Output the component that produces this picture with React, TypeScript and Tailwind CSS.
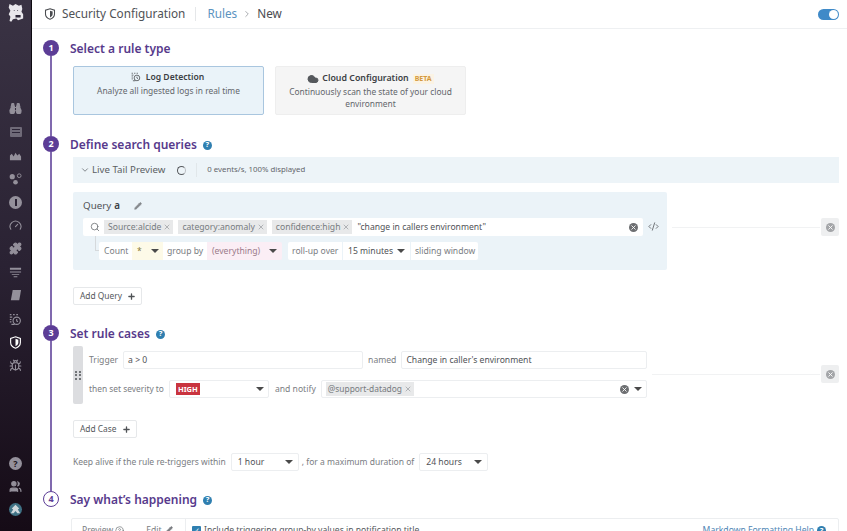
import type { ReactNode } from 'react';
import {
  Binoculars,
  Bug,
  ChevronDown,
  ChevronRight,
  CircleHelp,
  Cloud,
  CodeXml,
  Gauge,
  Pencil,
  Plus,
  Puzzle,
  Search,
  Users,
  X,
} from 'lucide-react';

const font = { fontFamily: '"Noto Sans", sans-serif' };

function Caret() {
  return <span className="ml-auto h-0 w-0 border-x-[4px] border-t-[4px] border-x-transparent border-t-[#4a4a4a]" />;
}

function Help() {
  return (
    <span className="flex h-[9px] w-[9px] items-center justify-center rounded-full bg-[#2f7fb0] text-[7.5px] font-bold leading-none text-white">
      ?
    </span>
  );
}

function ClearIcon({ className = 'bg-[#6d6f72]' }: { className?: string }) {
  return (
    <span className={`flex h-[9px] w-[9px] items-center justify-center rounded-full ${className}`}>
      <X className="h-[7px] w-[7px] text-white" strokeWidth={3} />
    </span>
  );
}

function Tag({ label, className = 'pl-[4px] text-[8.6px]' }: { label: string; className?: string }) {
  return (
    <span className={`flex h-[14px] items-center gap-[2px] bg-[#e8e9ea] pr-[2px] text-[#777b80] ${className}`}>
      {label}
      <X className="h-[8px] w-[8px] text-[#777b80]" strokeWidth={1.5} />
    </span>
  );
}

function LogIcon({ className = '' }: { className?: string }) {
  return (
    <svg viewBox="0 0 16 16" className={className} fill="none" stroke="currentColor" strokeWidth="1.4">
      <circle cx="9.5" cy="9.5" r="4.5" />
      <path d="M9.5 7.5v2.2l1.5 1M1 2h2M5 2h2M9 2h2M1 5h3M1 8h2M1 11h2M3 14h4" />
    </svg>
  );
}

function ShieldIcon({ className = '' }: { className?: string }) {
  return (
    <svg viewBox="0 0 16 16" className={className}>
      <path d="M8 1l6 2v5c0 3.5-2.5 5.8-6 7-3.5-1.2-6-3.5-6-7V3z" fill="none" stroke="currentColor" strokeWidth="1.4" />
      <path d="M8 3.5l3.5 1.2v3.3c0 2.2-1.5 3.7-3.5 4.5z" fill="currentColor" />
    </svg>
  );
}

function Step({
  n,
  title,
  help,
  outline,
  last,
  className,
  children,
}: {
  n: number;
  title: string;
  help?: boolean;
  outline?: boolean;
  last?: boolean;
  className: string;
  children?: ReactNode;
}) {
  return (
    <section className={`flex ${className}`}>
      <div className="flex w-[38px] shrink-0 flex-col items-center">
        <span
          className={`flex h-4 w-4 shrink-0 items-center justify-center rounded-full text-[9px] font-bold ${
            outline ? 'border border-[#5c3d96] bg-white text-[#5c3d96]' : 'bg-[#5c3d96] text-white'
          }`}
        >
          {n}
        </span>
        {!last && <span className="w-[2px] flex-1 bg-[#8069ae]" />}
      </div>
      <div className="min-w-0 flex-1">
        <div className="flex h-[18px] items-center gap-[6px]">
          <h2 className="text-[12px] font-semibold leading-4 text-[#573a8c]">{title}</h2>
          {help && <Help />}
        </div>
        {children}
      </div>
    </section>
  );
}

function Sidebar() {
  const iconCls = 'h-[13px] w-[13px]';
  return (
    <aside className="flex h-full w-8 shrink-0 flex-col items-center border-r border-[#0d0a10] bg-gradient-to-b from-[#3a3344] via-[#2a2233] to-[#150b16] text-[#94909b]">
      <svg viewBox="0 0 20 22" className="mt-[3px] h-[19px] w-[17px] text-[#e9e7ec]" fill="currentColor">
        <path d="M3 1l4 2 3-2 4 2 3-1 1 5-1 3 2 3v5l-6 2-2-2-4 1-2 3-2-1 1-5-2-3 2-4-2-4z" />
        <path d="M8 8h1v1H8zM12 8h1v1h-1zM10 14h6v3h-6z" fill="#2d2738" />
      </svg>
      <div className="mt-[80px] flex flex-col items-center gap-[10.4px]">
        <Binoculars className={iconCls} fill="currentColor" />
        <span className="flex h-[13px] items-center">
          <span className="flex h-[10px] w-[12px] flex-col gap-[2px] rounded-[1px] bg-[#6f6a78] p-[2px]">
            <span className="h-px bg-[#2d2638]" />
            <span className="h-px bg-[#2d2638]" />
          </span>
        </span>
        <svg viewBox="0 0 14 14" className={iconCls} fill="currentColor">
          <path d="M1 12V7l2-2 2 3 2-4 2 3 2-2 2 3v4z" />
        </svg>
        <svg viewBox="0 0 14 14" className={iconCls} fill="currentColor">
          <circle cx="3.5" cy="5" r="2.8" />
          <circle cx="7" cy="11" r="2.5" />
          <circle cx="11" cy="4" r="2" fill="none" stroke="currentColor" />
        </svg>
        <span className="flex h-[13px] w-[13px] items-center justify-center rounded-full bg-current">
          <span className="h-[7px] w-[2px] bg-[#2a2233]" />
        </span>
        <Gauge className={iconCls} />
        <Puzzle className={iconCls} fill="currentColor" />
        <svg viewBox="0 0 14 14" className={iconCls} fill="currentColor">
          <path d="M1 2h12v2H1zM1 6h12v1H1zM3 8.5h8v1H3zM5 11h4v1H5z" />
        </svg>
        <svg viewBox="0 0 14 14" className={iconCls} fill="currentColor">
          <path d="M4 1h9l-2 11H2z" />
        </svg>
        <LogIcon className={iconCls} />
        <ShieldIcon className={`${iconCls} text-white`} />
        <Bug className={iconCls} />
      </div>
      <div className="mt-auto mb-[15px] flex flex-col items-center gap-[10px]">
        <span className="flex h-[13px] w-[13px] items-center justify-center rounded-full bg-[#94909b] text-[9px] font-bold leading-none text-[#1d1420]">
          ?
        </span>
        <Users className={iconCls} fill="currentColor" />
        <svg viewBox="0 0 14 14" className={iconCls}>
          <circle cx="7" cy="7" r="7" fill="#3f7285" />
          <path d="M7 2l4 4-1.5 1L12 11H9L7 8.5 5 11H2l2.5-4L3 6z" fill="#cfd8dc" />
        </svg>
      </div>
    </aside>
  );
}

function Header() {
  return (
    <header className="flex h-[29px] shrink-0 items-center border-b border-[#eef0f2] pl-[12px] pr-[8px]">
      <ShieldIcon className="h-[12px] w-[12px] text-[#4a4c50]" />
      <span className="ml-[6px] text-[11.75px] text-[#4f5256]">Security Configuration</span>
      <span className="ml-[10px] h-[14px] w-px bg-[#e5e7e9]" />
      <span className="ml-[11px] text-[11.75px] text-[#5b93bf]">Rules</span>
      <ChevronRight className="ml-[5px] h-[10px] w-[10px] text-[#9a9da1]" />
      <span className="ml-[5px] text-[11.75px] text-[#4a4c50]">New</span>
      <span className="ml-auto flex h-[11px] w-[21px] items-center justify-end rounded-full bg-[#3f8ac8] pr-px">
        <span className="h-[9px] w-[9px] rounded-full bg-white" />
      </span>
    </header>
  );
}

function Select({ label, width }: { label: string; width: string }) {
  return (
    <div className={`flex h-[18px] items-center rounded-[2px] border border-[#eceef0] px-[6px] pr-[5px] text-[8.6px] text-[#4f5256] ${width}`}>
      {label}
      <Caret />
    </div>
  );
}

function RuleTypes() {
  return (
    <div className="mt-[8px] flex gap-[11px] pl-[3px]">
      <div className="flex h-[49px] w-[191px] flex-col items-center rounded-[2px] border border-[#a9c6df] bg-[#eaf3f9] pt-[4px]">
        <div className="flex items-center gap-[5px] text-[8.6px] font-semibold text-[#3c3f44]">
          <LogIcon className="-ml-[2px] h-[10px] w-[10px] text-[#55585c]" />
          Log Detection
        </div>
        <div className="mt-[1px] text-[8.4px] text-[#63666b]">Analyze all ingested logs in real time</div>
      </div>
      <div className="flex h-[49px] w-[191px] flex-col items-center rounded-[2px] border border-[#eeeeee] bg-[#f5f5f5] pt-[5px]">
        <div className="flex items-center gap-[3px] text-[8.8px] font-semibold text-[#3c3f44]">
          <Cloud className="h-[12px] w-[12px] text-[#55585c]" fill="currentColor" />
          Cloud Configuration
          <span className="ml-px bg-[#fbf3e4] px-[2px] text-[7px] font-bold leading-[10px] text-[#d59a3d]">BETA</span>
        </div>
        <div className="mt-[1px] w-[170px] text-center text-[8.4px] leading-[12px] text-[#63666b]">
          Continuously scan the state of your cloud environment
        </div>
      </div>
    </div>
  );
}

function Queries() {
  return (
    <div className="pl-[3px]">
      <div className="mt-[3px] flex h-[26px] items-center bg-[#edf4f8] pl-[7px]">
        <ChevronDown className="h-[10px] w-[10px] text-[#6e7277]" />
        <span className="ml-[2px] text-[9.7px] text-[#5b5e63]">Live Tail Preview</span>
        <span className="ml-[12px] h-[9px] w-[9px] rounded-full border-[1.5px] border-[#55585c] border-r-[#bbbec2]" />
        <span className="ml-[10px] h-[14px] w-px bg-[#e1e7ea]" />
        <span className="ml-[10px] text-[7.8px] text-[#63666b]">0 events/s, 100% displayed</span>
      </div>
      <div className="mt-[9px] flex items-start">
        <div className="h-[78px] w-[594px] rounded-[2px] bg-[#ebf3f8] pl-[10px] pr-[24px] pt-[7px]">
          <div className="flex h-[14px] items-center text-[9.8px] text-[#4f5256]">
            Query <b className="ml-[3px] font-semibold text-[#3c3f44]">a</b>
            <Pencil className="ml-[14px] h-[8px] w-[8px] text-[#85888c]" fill="currentColor" />
          </div>
          <div className="relative mt-[5px] flex h-[18px] items-center gap-[5px] rounded-[2px] bg-white pl-[7px] pr-[5px]">
            <Search className="-mr-px h-[10px] w-[10px] text-[#6f7276]" />
            <Tag label="Source:alcide" />
            <Tag label="category:anomaly" />
            <Tag label="confidence:high" />
            <span className="text-[8.6px] text-[#4f5256]">"change in callers environment"</span>
            <span className="ml-auto">
              <ClearIcon />
            </span>
            <CodeXml className="absolute -right-[16px] top-[3px] h-[11px] w-[11px] text-[#66696d]" />
            <span className="absolute left-[12px] top-[18px] h-[15px] w-[4px] border-b border-l border-[#d5d9dc]" />
          </div>
          <div className="mt-[6px] flex h-[18px] items-center pl-[16px] text-[8.6px]">
            <span className="flex h-full w-[33px] items-center rounded-l-[2px] bg-white pl-[5px] text-[#7a7d82]">Count</span>
            <span className="flex h-full w-[31px] items-center bg-[#fdfae8] pl-[5px] pr-[4px] text-[#8a7a3a]">
              *<Caret />
            </span>
            <span className="flex h-full w-[44px] items-center bg-white pl-[4px] text-[#7a7d82]">group by</span>
            <span className="flex h-full w-[75px] items-center rounded-r-[2px] bg-[#fbeef5] pl-[5px] pr-[5px] text-[#9a7a8a]">
              (everything)
              <Caret />
            </span>
            <span className="ml-[6px] flex h-full w-[54px] items-center rounded-l-[2px] bg-white pl-[4px] text-[#7a7d82]">roll-up over</span>
            <span className="ml-px flex h-full w-[67px] items-center bg-white pl-[5px] pr-[5px] text-[#4f5256]">
              15 minutes
              <Caret />
            </span>
            <span className="ml-px flex h-full w-[67px] items-center rounded-r-[2px] bg-white pl-[4px] text-[#7a7d82]">sliding window</span>
          </div>
        </div>
        <div className="mt-[35px] ml-[5px] h-px flex-1 bg-[#f1f2f3]" />
        <span className="ml-[1px] mt-[26px] flex h-[18px] w-[18px] items-center justify-center rounded-[2px] bg-[#eeeff0]">
          <ClearIcon className="bg-[#a3a5a8]" />
        </span>
      </div>
      <button className="mt-[17px] flex h-[18px] w-[69px] items-center gap-[5px] rounded-[2px] border border-[#e6e8ea] pl-[6px] text-[8.4px] text-[#55585c]">
        Add Query
        <Plus className="h-[9px] w-[9px] text-[#4f5256]" strokeWidth={3.5} />
      </button>
    </div>
  );
}

function Cases() {
  return (
    <div className="pl-[3px]">
      <div className="mt-[3px] flex">
        <div className="flex h-[58px] w-[10px] shrink-0 items-center justify-center rounded-[2px] bg-[#dcdde0]">
          <span className="grid grid-cols-2 gap-[1.5px]">
            {[0, 1, 2, 3, 4, 5].map((i) => (
              <span key={i} className="h-[2px] w-[2px] rounded-full bg-[#4f5256]" />
            ))}
          </span>
        </div>
        <div className="w-[564px] pl-[6px] pt-[5px] text-[8.6px] text-[#7a7d82]">
          <div className="flex h-[18px] items-center">
            <span>Trigger</span>
            <span className="ml-[5px] flex h-full w-[240px] items-center rounded-[2px] border border-[#eceef0] px-[4px] text-[#4f5256]">a &gt; 0</span>
            <span className="ml-[5px]">named</span>
            <span className="ml-[5px] flex h-full flex-1 items-center rounded-[2px] border border-[#eceef0] px-[4px] text-[#4f5256]">
              Change in caller's environment
            </span>
          </div>
          <div className="mt-[11px] flex h-[18px] items-center">
            <span className="text-[8.4px]">then set severity to</span>
            <div className="ml-[5px] flex h-full w-[100px] items-center rounded-[2px] border border-[#eceef0] pl-[6px] pr-[4px]">
              <span className="bg-[#c9343f] px-[2px] text-[7.5px] font-bold leading-[12px] text-white">HIGH</span>
              <Caret />
            </div>
            <span className="ml-[6px]">and notify</span>
            <div className="ml-[5px] flex h-full flex-1 items-center rounded-[2px] border border-[#eceef0] pl-[4px] pr-[4px]">
              <Tag label="@support-datadog" className="pl-[2px] text-[8.4px]" />
              <span className="ml-auto">
                <ClearIcon />
              </span>
              <span className="ml-[5px] h-0 w-0 border-x-[4px] border-t-[4px] border-x-transparent border-t-[#4a4a4a]" />
            </div>
          </div>
        </div>
        <div className="mt-[28px] ml-[5px] h-px flex-1 bg-[#f1f2f3]" />
        <span className="ml-[1px] mt-[19px] flex h-[18px] w-[18px] items-center justify-center rounded-[2px] bg-[#eeeff0]">
          <ClearIcon className="bg-[#a3a5a8]" />
        </span>
      </div>
      <button className="mt-[16px] flex h-[18px] w-[64px] items-center gap-[5px] rounded-[2px] border border-[#e6e8ea] pl-[6px] text-[8.4px] text-[#55585c]">
        Add Case
        <Plus className="h-[9px] w-[9px] text-[#4f5256]" strokeWidth={3.5} />
      </button>
      <div className="mt-[15px] flex items-center text-[8.5px] text-[#7a7d82]">
        Keep alive if the rule re-triggers within
        <Select label="1 hour" width="w-[68px] ml-[5px]" />
        <span className="ml-[3px]">, for a maximum duration of</span>
        <Select label="24 hours" width="w-[69px] ml-[5px]" />
      </div>
    </div>
  );
}

function Editor() {
  return (
    <div className="ml-px mt-[9px] flex h-[40px] rounded-t-[2px] border border-[#eceef0] text-[8.6px] leading-[12px]">
      <div className="flex w-[114px] items-start border-r border-[#eceef0] pl-[10px] pt-[5px] text-[#7a7d82]">
        Preview
        <CircleHelp className="ml-[2px] mt-[2px] h-[9px] w-[9px]" />
        <span className="ml-[22px]">Edit</span>
        <Pencil className="ml-[3px] mt-[2px] h-[8px] w-[8px]" fill="currentColor" />
      </div>
      <div className="flex flex-1 items-start pl-[6px] pr-[12px] pt-[5px] text-[#55585c]">
        <span className="mt-[2px] flex h-[9px] w-[9px] items-center justify-center rounded-[1px] bg-[#2f7fb0] text-[7px] leading-none text-white">
          ✓
        </span>
        <span className="ml-[3px]">Include triggering group-by values in notification title</span>
        <span className="ml-auto text-[#4f86b5]">Markdown Formatting Help</span>
        <span className="ml-[3px] mt-[2px]">
          <Help />
        </span>
      </div>
    </div>
  );
}

export default function App() {
  return (
    <div className="flex h-[531px] w-[847px] overflow-hidden bg-white" style={font}>
      <Sidebar />
      <main className="flex min-w-0 flex-1 flex-col">
        <Header />
        <div className="flex-1 pr-[8px] pt-[11px]">
          <Step n={1} title="Select a rule type" className="h-[96px]">
            <RuleTypes />
          </Step>
          <Step n={2} title="Define search queries" help className="h-[189px]">
            <Queries />
          </Step>
          <Step n={3} title="Set rule cases" help className="h-[166px]">
            <Cases />
          </Step>
          <Step n={4} title="Say what’s happening" help outline last className="h-[60px]">
            <Editor />
          </Step>
        </div>
      </main>
    </div>
  );
}
